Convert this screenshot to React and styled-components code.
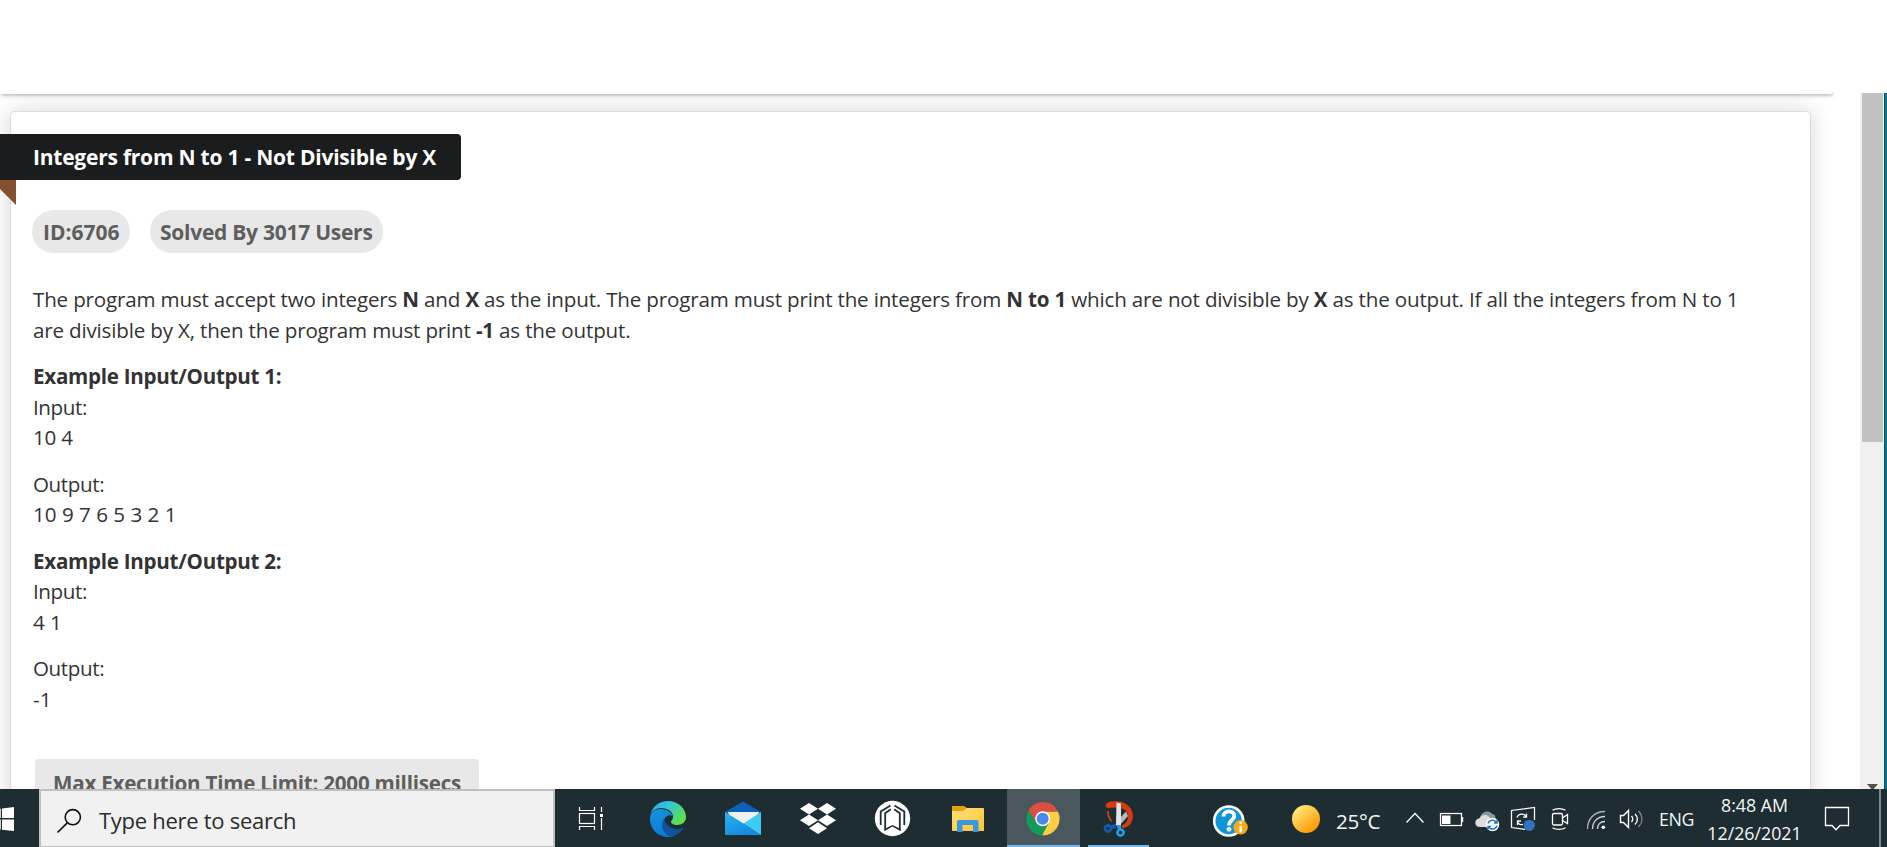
import React from "react";
import styled, { createGlobalStyle } from "styled-components";

const GlobalStyle = createGlobalStyle`
  *, *::before, *::after { box-sizing: border-box; }
  html, body { margin: 0; height: 100%; overflow: hidden; background: #fff; }
  body { font-family: "Open Sans", "Noto Sans", sans-serif; }
`;

/* ---------- page ---------- */
const Screen = styled.div`
  display: flex;
  flex-direction: column;
  width: 1887px;
  height: 847px;
  overflow: hidden;
`;
const TopBar = styled.header`
  flex: none;
  width: 1834px;
  height: 94px;
  background: #fff;
  border-radius: 0 0 4px 0;
  box-shadow: 0 2px 4px -1px rgba(0, 0, 0, 0.36);
  clip-path: inset(0 0 -8px 0);
  position: relative;
  z-index: 1;
`;
const Viewport = styled.div`
  flex: 1;
  min-height: 0;
  display: flex;
  margin-top: -1px;
`;
const Content = styled.main`
  flex: 1;
  min-width: 0;
  overflow: hidden;
  padding: 18px 49px 0 10px;
`;
const Card = styled.article`
  height: 900px;
  padding: 22px 21px 0 22px;
  background: #fff;
  border: 1px solid #dcdcdc;
  border-radius: 4px;
  box-shadow: 0 0 22px rgba(0, 0, 0, 0.17);
`;
const Ribbon = styled.h1`
  position: relative;
  width: 461px;
  height: 46px;
  margin: 0 0 30px -33px;
  padding-left: 33px;
  background: #1b1c1d;
  border-radius: 0 4px 4px 0;
  color: #fff;
  font-size: 21px;
  font-weight: 700;
  line-height: 46px;
  letter-spacing: -0.23px;
  white-space: nowrap;

  &::after {
    content: "";
    position: absolute;
    left: 0;
    top: 100%;
    width: 16px;
    height: 25px;
    background: #85502f;
    clip-path: polygon(0 0, 100% 0, 100% 100%, 0 36%);
  }
`;
const Pills = styled.div`
  display: flex;
  gap: 20px;
  margin: 0 0 31px -1px;
`;
const Pill = styled.span`
  width: ${(p) => p.$width}px;
  height: 43px;
  padding-left: ${(p) => p.$inset}px;
  border-radius: 22px;
  background: #e8e8e8;
  color: #5e5e5e;
  font-size: 21px;
  font-weight: 700;
  line-height: 45px;
  letter-spacing: ${(p) => p.$spacing}px;
  white-space: nowrap;
`;
const Paragraph = styled.p`
  margin: 0 0 16px;
  color: #333;
  font-size: 20.6px;
  line-height: 30.5px;
  letter-spacing: -0.182px;
  white-space: nowrap;
`;
const Label = styled.span`letter-spacing: -0.4px;`;
const Heading = styled.b`letter-spacing: -0.27px;`;
const Digits = styled.span`letter-spacing: ${(p) => p.$spacing || 0}px;`;
const LimitTag = styled.div`
  width: 444px;
  height: 48px;
  margin: 45px 0 0 2px;
  padding-left: 18px;
  background: #e8e8e8;
  border-radius: 4px;
  color: #5e5e5e;
  font-size: 20.6px;
  font-weight: 700;
  line-height: 48px;
  letter-spacing: -0.23px;
  white-space: nowrap;
`;

/* ---------- scrollbar ---------- */
const Scrollbar = styled.div`
  flex: none;
  display: flex;
  flex-direction: column;
  align-items: flex-end;
  justify-content: space-between;
  width: 24px;
  padding: 0 1px 0 2px;
  background: #f0f0f0;
`;
const Thumb = styled.div`
  width: 21px;
  height: 349px;
  background: #c1c1c1;
`;
const ScrollArrow = styled.div`
  align-self: center;
  width: 11px;
  height: 5px;
  background: #505050;
  clip-path: polygon(0 0, 100% 0, 60% 100%, 40% 100%);
`;
const DesktopEdge = styled.div`
  flex: none;
  width: 3px;
  background: #00788d;
  border-left: 1px solid #23474f;
`;

/* ---------- taskbar ---------- */
const Taskbar = styled.footer`
  position: relative;
  z-index: 2;
  flex: none;
  display: flex;
  height: 58px;
  background: #1e2d32;
`;
const SearchBox = styled.div`
  display: flex;
  width: 516px;
  background: #f1f1f1;
  border: 2px solid #bfbfbf;
  border-bottom-width: 1px;
`;
const SearchText = styled.span`
  margin-left: 2px;
  color: #2b2b2b;
  font-size: 22px;
  line-height: 59px;
  letter-spacing: -0.28px;
  white-space: nowrap;
`;
const Drawing = styled.svg`
  flex: none;
  display: block;
  overflow: visible;
`;
const AppButton = styled.div`
  flex: none;
  width: ${(p) => p.$width}px;
  height: 58px;
  background: ${(p) => (p.$active ? "#4a575c" : "transparent")};
`;
const TrayText = styled.span`
  flex: none;
  width: ${(p) => p.$width}px;
  font-size: ${(p) => p.$size}px;
  line-height: ${(p) => p.$line}px;
  letter-spacing: ${(p) => p.$spacing || 0}px;
  color: #f4f6f6;
  white-space: nowrap;
`;
const Clock = styled.div`
  flex: none;
  display: flex;
  flex-direction: column;
  width: 107px;
  padding: 2px 2px 0 0;
  align-items: center;
  color: #f4f6f6;
  font-size: 17.8px;
  line-height: 28px;
  white-space: nowrap;
`;
const ShowDesktop = styled.div`
  width: 8px;
  border-left: 2px solid #7c8689;
`;

/* Each icon is drawn in screen units; x is the left edge of its slot. */
const Icon = ({ x, w, children }) => (
  <Drawing width={w} height="58" viewBox={`${x} 789 ${w} 58`} fill="none">{children}</Drawing>
);

const StartIcon = () => (
  <Icon x={0} w={39}>
    <path d="M0 808.7L.8 808.6V818H0zM2 808.4L14 807V818H2zM0 819.5H.8V829.6L0 829.5zM2 819.5H14V831L2 829.7z" fill="#fff" />
  </Icon>
);
const SearchIcon = () => (
  <Icon x={41} w={56}>
    <circle cx="72.8" cy="815.2" r="7.6" stroke="#111" strokeWidth="1.6" />
    <path d="M67.3 820.9L57.5 830.5" stroke="#111" strokeWidth="1.7" />
  </Icon>
);
const TaskViewIcon = () => (
  <Icon x={555} w={75}>
    <g stroke="#fff" strokeWidth="1.2">
      <path d="M579.5 807V810.5H594.5V807M579.5 830V826.5H594.5V830M601.5 807V812M601.5 818V830" />
      <rect x="579.5" y="813.5" width="15" height="10" />
    </g>
    <rect x="600" y="814" width="3" height="3" fill="#fff" />
  </Icon>
);
const EdgeIcon = () => (
  <Icon x={630} w={75}>
    <defs>
      <linearGradient id="edgeTop" x1="0" y1="0" x2="1" y2=".55"><stop offset="0" stopColor="#28a8e8" /><stop offset=".45" stopColor="#30c5dc" /><stop offset="1" stopColor="#5fe04e" /></linearGradient>
      <linearGradient id="edgeLeft" x1="0" y1="0" x2=".5" y2="1"><stop offset="0" stopColor="#1795d8" /><stop offset="1" stopColor="#087bdc" /></linearGradient>
    </defs>
    <path d="M650 816C652 806 660 801 668 801C679 801 686 809 686 817C686 822 682 825 677 825C673 825 671 823.5 671 822C671 820.5 673 820 673 816.5C673 812 668 808 661 808C655 808 651 812 650 816Z" fill="url(#edgeTop)" />
    <path d="M650 819C650 812 655 809 661 809C667 809 672 813 672.5 816C670 814 664 816 663.5 822C663 829 668 835.5 676 834.8C673 836.5 671 837 668 837C658 837 650 829 650 819Z" fill="url(#edgeLeft)" />
    <path d="M664 819C660 825 662 833 670 836.5C676 836 681 832 683.5 828.5C684 827.8 683 827.5 682.5 828C675 831 666.5 827 664 819Z" fill="#12529d" />
  </Icon>
);
const MailIcon = () => (
  <Icon x={705} w={75}>
    <defs><linearGradient id="mail" x1="0" y1="0" x2=".6" y2="1"><stop offset="0" stopColor="#28b5f0" /><stop offset="1" stopColor="#1589de" /></linearGradient></defs>
    <path d="M725 812L743 801.5L761 812V816H725z" fill="#0b60b8" />
    <path d="M728 812H759L756 820L743 824L730 818z" fill="#f0f0f0" />
    <path d="M725 812L743.5 823.5L761 835H725z" fill="url(#mail)" />
    <path d="M761 812V835L743.5 823.5z" fill="#3ccbf6" />
  </Icon>
);
const DropboxIcon = () => (
  <Icon x={780} w={75}>
    <path d="M809 803L818 808.7L809 814.4L800 808.7zM827 803L836 808.7L827 814.4L818 808.7zM809 814.6L818 820.3L809 826L800 820.3zM827 814.6L836 820.3L827 826L818 820.3zM818 822.3L827 828.2L818 834L809 828.2z" fill="#fff" />
  </Icon>
);
const BadgeIcon = () => (
  <Icon x={855} w={75}>
    <circle cx="892.5" cy="818.5" r="17.7" fill="#fff" />
    <g stroke="#1e2d32" strokeWidth="1.8">
      <path d="M890.5 805.5L880.7 811.5V825" />
      <path d="M890.8 809.3L885.2 813.3V829.5" />
      <path d="M894.5 805.5L904.300 811.5V825" />
      <path d="M894.2 809.3L899.8 813.3V829.5" />
    </g>
    <path d="M884.3 831.3L892.5 826.5L900.7 831.3V829L892.5 824.9L884.3 829z" fill="#1e2d32" />
  </Icon>
);
const ExplorerIcon = () => (
  <Icon x={930} w={77}>
    <defs><linearGradient id="folder" x1="0" y1="0" x2="1" y2="1"><stop offset="0" stopColor="#ffe07a" /><stop offset="1" stopColor="#fbc437" /></linearGradient></defs>
    <path d="M952 806H964L967 808H983V816H952z" fill="#e5a110" />
    <path d="M952 811H963L967 808H983Q984 808 984 809V831H953Q952 831 952 830z" fill="url(#folder)" />
    <path d="M957 832V822Q957 820 959 820H976.5Q978.5 820 978.5 822V832H973V825H962.5V832z" fill="#3b97dc" />
  </Icon>
);
const ChromeIcon = () => (
  <Icon x={1007} w={73}>
    <path d="M1042.7 818.8L1042.7 835.4A16.600 16.600 0 0 0 1057.9 811.5H1042.7z" fill="#fdce44" />
    <path d="M1028.4 810.5A16.600 16.600 0 0 1 1057.9 811.5H1042.7L1036.4 823z" fill="#d94f43" />
    <path d="M1028.4 810.5L1036.4 822.5L1049 822.5L1042 835.4A16.600 16.600 0 0 1 1028.4 810.5z" fill="#139b5a" />
    <circle cx="1042.7" cy="818.8" r="7.5" fill="#fff" />
    <circle cx="1042.7" cy="818.8" r="6" fill="#4b87ec" />
    <rect x="1007" y="845" width="73" height="2" fill="#71b6ec" />
  </Icon>
);
const SnipIcon = () => (
  <Icon x={1080} w={77}>
    <path d="M1106 804C1108 801 1115 801 1119 801.5C1127 802.5 1133 809 1133 816C1133 823 1128 828 1122.5 828L1121 826C1126 824 1128.5 820 1128 815C1127.5 809 1120 806 1108 808C1105.5 807.5 1105.5 805.5 1106 804Z" fill="#d83b12" />
    <path d="M1108 811C1108 816 1109.5 819 1111.5 821" stroke="#d83b12" strokeWidth="1.8" />
    <path d="M1117 821L1126 811.5L1128 816L1120 825z" fill="#b4b8ba" />
    <path d="M1116.5 802.5L1121 803.5V825H1116z" fill="#e2e4e5" />
    <circle cx="1108" cy="828.5" r="3.1" stroke="#0c5eb0" strokeWidth="2.6" />
    <circle cx="1120.5" cy="832.5" r="3.1" stroke="#20a0e8" strokeWidth="2.6" />
    <path d="M1110 825.5L1116 824V828L1112 829z" fill="#0c5eb0" />
    <path d="M1116 825H1121V829H1118z" fill="#20a0e8" />
    <rect x="1088" y="845" width="61" height="2" fill="#71b6ec" />
  </Icon>
);
const HelpIcon = () => (
  <Icon x={1190} w={80}>
    <circle cx="1228.7" cy="821" r="14.5" fill="#0c98d8" stroke="#fff" strokeWidth="2.6" />
    <path d="M1223.5 816.5C1223.5 809.5 1234.5 810 1234.3 816C1234 820.5 1229 820 1229 825.5" stroke="#fff" strokeWidth="3.8" />
    <circle cx="1229" cy="829.3" r="2.4" fill="#fff" />
    <circle cx="1240.6" cy="827.3" r="7.2" fill="#f5aa1c" />
    <path d="M1240.7 825.8V832.3" stroke="#fff" strokeWidth="2.4" />
    <circle cx="1240.7" cy="822.8" r="1.4" fill="#fff" />
  </Icon>
);
const SunIcon = () => (
  <Icon x={1270} w={66}>
    <defs><linearGradient id="sun" x1=".15" y1=".1" x2=".8" y2=".9"><stop offset="0" stopColor="#ffe97a" /><stop offset="1" stopColor="#ff9800" /></linearGradient></defs>
    <circle cx="1306" cy="819" r="14" fill="url(#sun)" />
  </Icon>
);
const TrayIcons = () => (
  <Icon x={1386} w={273}>
    <g stroke="#fff" strokeWidth="1.25">
      <path d="M1406.5 822.5L1415 813.5L1423.5 822.5" />
      <rect x="1440.5" y="813.5" width="21" height="12" />
      <path d="M1462.5 817V822" strokeWidth="1.5" />
    </g>
    <rect x="1442" y="815.5" width="8.5" height="8.5" fill="#fff" />
    <path d="M1480 818C1481 811.5 1489 809.5 1492 814C1496 813.5 1496.5 820 1494 822H1484z" fill="#8e9697" />
    <path d="M1480 827C1474 827 1473.5 819 1480 818C1482 813.5 1488.5 814.5 1490 818L1493 827z" fill="#dcdedd" />
    <circle cx="1492.5" cy="824.5" r="6.7" fill="#fff" />
    <path d="M1488 823.5A4.7 4.7 0 0 1 1496.5 822.5M1497 825.8A4.7 4.7 0 0 1 1488.5 826.8M1497 820V823H1494M1488 829.5V826.5H1491" stroke="#1878c8" strokeWidth="1.5" />
    <path d="M1525 829.3L1511.5 827.5V810.5L1534.5 807.5V820" stroke="#fff" strokeWidth="1.25" />
    <path d="M1517 817.5C1518.5 813 1525 813 1526 817M1526.5 813.5V817.2H1523M1523 824.5C1520 825 1518 824 1517.5 821H1521M1517.5 825V821" stroke="#fff" strokeWidth="1.3" />
    <circle cx="1529.3" cy="825.3" r="5.6" fill="#2f74c0" />
    <g stroke="#fff" strokeWidth="1.3">
      <rect x="1552.5" y="813.5" width="10" height="11.5" rx="1.5" />
      <path d="M1562.5 818L1567.5 814.5V823.5L1562.5 820.5M1552.5 810.3C1556 808 1562 808 1565.5 810.3M1552.5 827.7C1556 830 1562 830 1565.5 827.7" />
    </g>
    <g stroke="#d5d9da" strokeWidth="1.3">
      <path d="M1587.5 829C1587.5 819 1594 811.5 1605 811.5" opacity=".8" />
      <path d="M1592.5 829C1592.5 822 1597 816.5 1605 816.5" />
      <path d="M1597.5 829C1597.5 825 1600 821.5 1605 821.5" />
    </g>
    <circle cx="1603.3" cy="827.3" r="1.8" fill="#fff" />
    <path d="M1620.5 815.5H1623.5L1628.5 810.5V827.5L1623.5 822.5H1620.5z" stroke="#fff" strokeWidth="1.4" />
    <path d="M1631.5 816C1633.2 818 1633.2 820 1631.5 822M1635 814C1638 817 1638 821 1635 824.5" stroke="#fff" strokeWidth="1.3" />
    <path d="M1638.5 811C1643 816 1643 822 1638.5 827" stroke="#7c8688" strokeWidth="1.3" />
  </Icon>
);
const NotificationIcon = () => (
  <Icon x={1809} w={70}>
    <path d="M1825.5 807.5H1848.5V825.5H1840L1836 829.8L1832 825.5H1825.5z" stroke="#fff" strokeWidth="1.3" />
  </Icon>
);

export default function App() {
  return (
    <Screen>
      <GlobalStyle />
      <TopBar />
      <Viewport>
        <Content>
          <Card>
            <Ribbon>Integers from N to 1 - Not Divisible by X</Ribbon>
            <Pills>
              <Pill $width={98} $inset={11} $spacing={-0.02}>ID:6706</Pill>
              <Pill $width={233} $inset={10} $spacing={-0.26}>Solved By 3017 Users</Pill>
            </Pills>
            <Paragraph>
              The program must accept two integers <b>N</b> and <b>X</b> as the input. The program must print the
              integers from <b>N to 1</b> which are not divisible by <b>X</b> as the output. If all the integers from N to 1
              <br />
              are divisible by X, then the program must print <b>-1</b> as the output.
            </Paragraph>
            <Paragraph>
              <Heading>Example Input/Output 1:</Heading><br />
              <Label>Input:</Label><br />
              <Digits $spacing={-0.2}>10 4</Digits>
            </Paragraph>
            <Paragraph>
              <Label>Output:</Label><br />
              <Digits>10 9 7 6 5 3 2 1</Digits>
            </Paragraph>
            <Paragraph>
              <Heading>Example Input/Output 2:</Heading><br />
              <Label>Input:</Label><br />
              <Digits $spacing={-0.1}>4 1</Digits>
            </Paragraph>
            <Paragraph>
              <Label>Output:</Label><br />
              <Digits>-1</Digits>
            </Paragraph>
            <LimitTag>Max Execution Time Limit: 2000 millisecs</LimitTag>
          </Card>
        </Content>
        <Scrollbar>
          <Thumb />
          <ScrollArrow />
        </Scrollbar>
        <DesktopEdge />
      </Viewport>
      <Taskbar>
        <StartIcon />
        <SearchBox>
          <SearchIcon />
          <SearchText>Type here to search</SearchText>
        </SearchBox>
        <AppButton $width={75}><TaskViewIcon /></AppButton>
        <AppButton $width={75}><EdgeIcon /></AppButton>
        <AppButton $width={75}><MailIcon /></AppButton>
        <AppButton $width={75}><DropboxIcon /></AppButton>
        <AppButton $width={75}><BadgeIcon /></AppButton>
        <AppButton $width={77}><ExplorerIcon /></AppButton>
        <AppButton $width={73} $active><ChromeIcon /></AppButton>
        <AppButton $width={110}><SnipIcon /></AppButton>
        <HelpIcon />
        <SunIcon />
        <TrayText $width={50} $size={20.6} $line={64} $spacing={-0.3}>25°C</TrayText>
        <TrayIcons />
        <TrayText $width={43} $size={17.8} $line={60} $spacing={-0.4}>ENG</TrayText>
        <Clock>
          <span>8:48 AM</span>
          <span>12/26/2021</span>
        </Clock>
        <NotificationIcon />
        <ShowDesktop />
      </Taskbar>
    </Screen>
  );
}
